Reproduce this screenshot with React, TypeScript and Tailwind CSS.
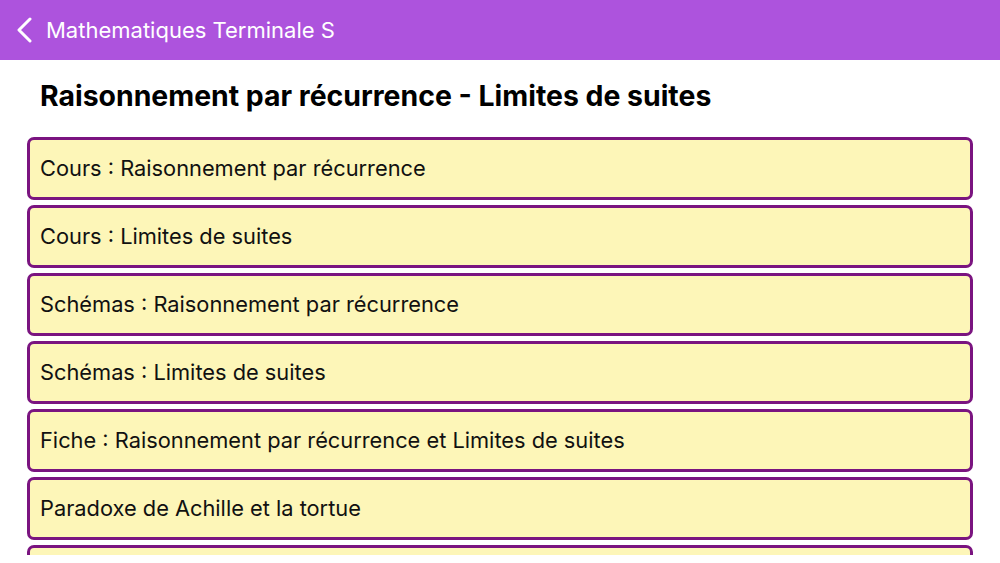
const items = [
  "Cours : Raisonnement par récurrence",
  "Cours : Limites de suites",
  "Schémas : Raisonnement par récurrence",
  "Schémas : Limites de suites",
  "Fiche : Raisonnement par récurrence et Limites de suites",
  "Paradoxe de Achille et la tortue",
  "",
];

export default function App() {
  return (
    <div className="w-[1000px] h-[563px] bg-white overflow-hidden" style={{ fontFamily: "Inter, 'Noto Sans', sans-serif" }}>
      <header className="h-[60px] bg-[#ad53dd] flex items-center pl-[16px] text-white">
        <svg width="18" height="26" viewBox="0 0 18 26" fill="none" className="mr-[12px]">
          <path d="M14 2 L3 13 L14 24" stroke="white" strokeWidth="3" strokeLinecap="round" strokeLinejoin="round" />
        </svg>
        <span className="text-[22px] leading-none">Mathematiques Terminale S</span>
      </header>

      <h1 className="pl-[40px] pt-[16px] h-[77px] text-[28.4px] font-bold text-black leading-[40px]">
        Raisonnement par récurrence - Limites de suites
      </h1>

      <div className="h-[418px] overflow-hidden">
        <ul className="flex flex-col gap-[5px] px-[27px]">
          {items.map((label, i) => (
            <li
              key={i}
              className="h-[63px] flex items-center px-[10px] bg-[#fdf6b8] border-[3px] border-[#7a1480] rounded-[7px] text-[21.8px] text-[#111]"
            >
              {label}
            </li>
          ))}
        </ul>
      </div>
    </div>
  );
}
